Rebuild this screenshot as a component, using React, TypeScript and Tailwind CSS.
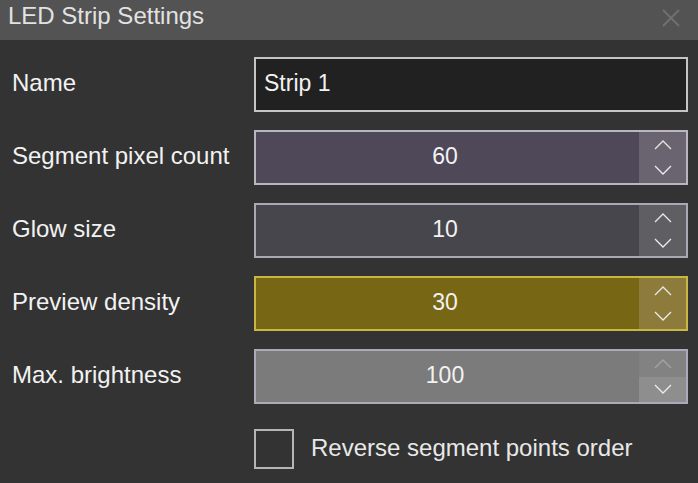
import React from "react";

type Tone = {
  field: string;
  spin: string;
  spinDown?: string;
  border: string;
  upArrow?: string;
};

const tones: Record<string, Tone> = {
  purple: { field: "bg-[#4e4858]", spin: "bg-[#69646f]", border: "border-[#bab6c0]" },
  gray: { field: "bg-[#47464c]", spin: "bg-[#5f5e63]", border: "border-[#aba8b6]" },
  gold: { field: "bg-[#776613]", spin: "bg-[#8c7b3b]", border: "border-[#cab742]" },
  light: {
    field: "bg-[#7b7b7b]",
    spin: "bg-[#828282]",
    spinDown: "bg-[#8e8e8e]",
    border: "border-[#aca9ba]",
    upArrow: "text-[#a3a3a3]",
  },
};

function Chevron({ up, className }: { up?: boolean; className?: string }) {
  return (
    <svg width="18" height="10" viewBox="0 0 18 10" className={className}>
      <path
        d={up ? "M1 9 L9 1 L17 9" : "M1 1 L9 9 L17 1"}
        fill="none"
        stroke="currentColor"
        strokeWidth="1.3"
      />
    </svg>
  );
}

function NumberField({ value, tone }: { value: string; tone: Tone }) {
  return (
    <div className={`flex h-[55px] w-[434px] border-2 ${tone.border} ${tone.field}`}>
      <div className="flex flex-1 items-center justify-center pr-[5px] pb-[2px] text-[23px] text-[#f2f2f2]">{value}</div>
      <div className={`flex w-[47px] flex-col ${tone.spin}`}>
        <div className={`flex flex-1 items-center justify-center ${tone.upArrow ?? "text-[#e6e6e6]"}`}>
          <Chevron up />
        </div>
        <div className={`flex flex-1 items-center justify-center text-[#ececec] ${tone.spinDown ?? ""}`}>
          <Chevron />
        </div>
      </div>
    </div>
  );
}

const rows = [
  { label: "Segment pixel count", value: "60", tone: tones.purple },
  { label: "Glow size", value: "10", tone: tones.gray },
  { label: "Preview density", value: "30", tone: tones.gold },
  { label: "Max. brightness", value: "100", tone: tones.light },
];

export default function App() {
  return (
    <div className="h-[483px] w-[698px] overflow-hidden bg-[#333333] font-['Liberation_Sans',Arial,sans-serif]">
      {/* Title bar */}
      <div className="flex h-10 items-start justify-between bg-[#535353] pl-2 pr-[18px]">
        <span className="text-[24px] leading-8 text-[#e2e2e2]">LED Strip Settings</span>
        <svg width="18" height="18" viewBox="0 0 18 18" className="mt-[9px] text-[#707070]">
          <path d="M1 1 L17 17 M17 1 L1 17" stroke="currentColor" strokeWidth="2" />
        </svg>
      </div>

      <div className="flex flex-col gap-[18px] pt-[17px] pl-3">
        <div className="flex items-center">
          <span className="w-[242px] pb-[3px] text-[24px] text-[#f2f2f2]">Name</span>
          <div className="flex h-[55px] w-[434px] items-center border-2 border-[#c5c5c5] bg-[#212121] px-2 pb-[2px] text-[23px] text-[#f2f2f2]">
            Strip 1
          </div>
        </div>

        {rows.map((r) => (
          <div key={r.label} className="flex items-center">
            <span className="w-[242px] pb-[3px] text-[24px] text-[#f2f2f2]">{r.label}</span>
            <NumberField value={r.value} tone={r.tone} />
          </div>
        ))}

        <div className="mt-[7px] flex items-center pl-[242px]">
          <div className="h-10 w-10 border-2 border-[#b5b5b5]" />
          <span className="ml-[17px] pb-[2px] text-[24px] text-[#e8e8e8]">Reverse segment points order</span>
        </div>
      </div>
    </div>
  );
}
